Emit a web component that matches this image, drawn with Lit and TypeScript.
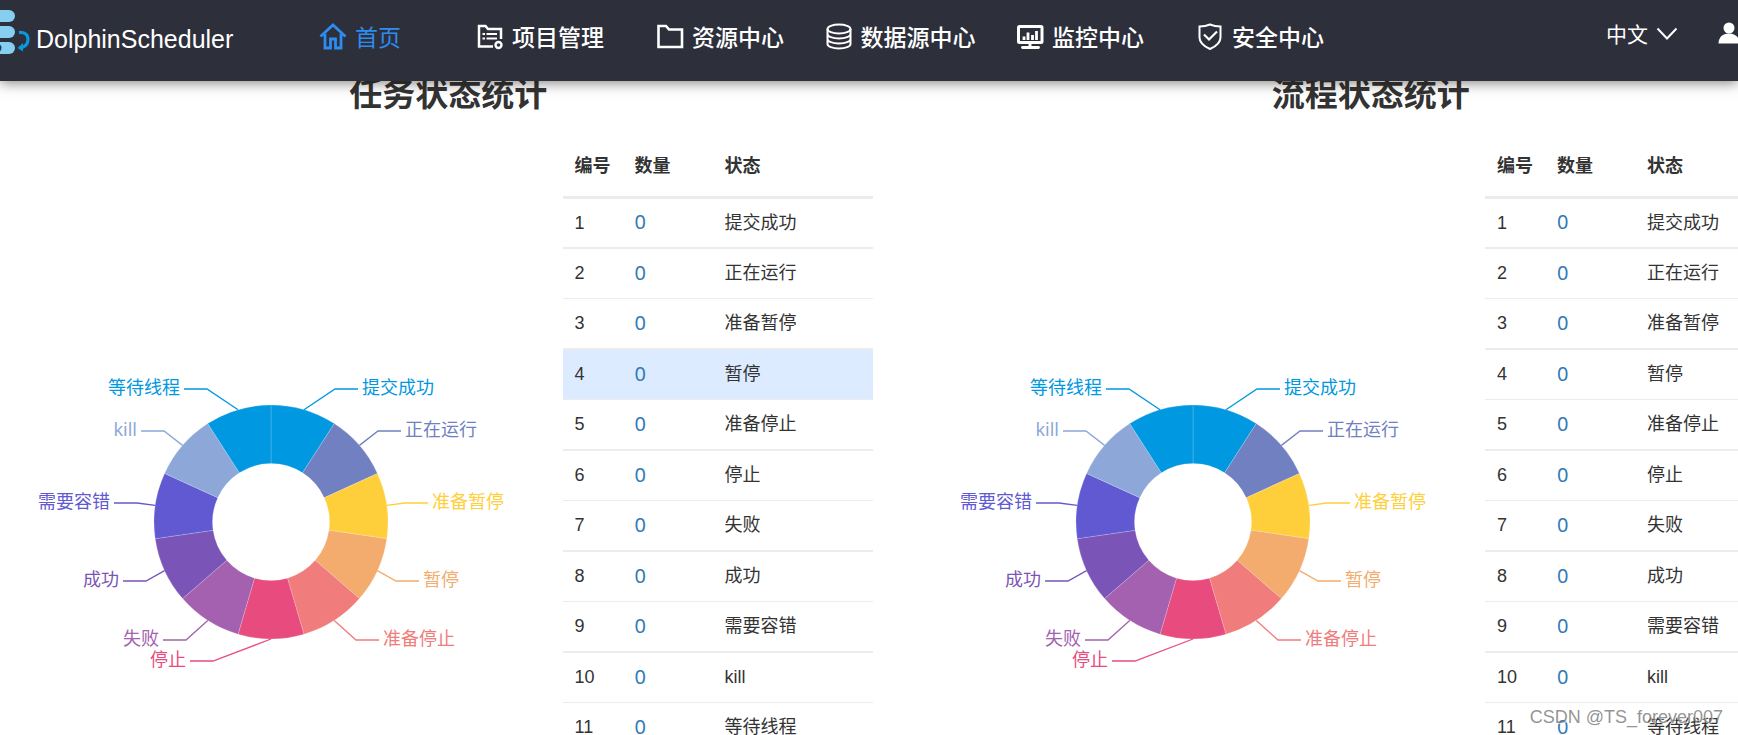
import { LitElement, html, svg, css } from "lit";
import { customElement, property } from "lit/decorators.js";
import { classMap } from "lit/directives/class-map.js";

type Slice = { name: string; color: string; knee: [number, number] };

// knee: where the leader line turns horizontal, measured from the ring's centre.
const STATES: Slice[] = [
  { name: "提交成功", color: "#0098e1", knee: [64, -133] },
  { name: "正在运行", color: "#7180c0", knee: [107, -91] },
  { name: "准备暂停", color: "#ffcf3b", knee: [134, -19] },
  { name: "暂停", color: "#f3ab6e", knee: [125, 59] },
  { name: "准备停止", color: "#f07c7b", knee: [85, 118] },
  { name: "停止", color: "#e84c7f", knee: [-58, 139] },
  { name: "失败", color: "#a361b0", knee: [-85, 118] },
  { name: "成功", color: "#7b54b8", knee: [-125, 59] },
  { name: "需要容错", color: "#6159d1", knee: [-134, -19] },
  { name: "kill", color: "#8ca7d8", knee: [-107, -91] },
  { name: "等待线程", color: "#0098e1", knee: [-64, -133] },
];

const OUTER = 117;
const INNER = 58.5;
const STEP = (Math.PI * 2) / STATES.length;

const FONT = css`"Liberation Sans", "Noto Sans CJK SC", sans-serif`;

@customElement("state-pie")
export class StatePie extends LitElement {
  static styles = css`
    :host { display: block; }
    .pie { display: block; margin: 0 auto; overflow: visible; }
    .label { font: 18px "Noto Sans", "Noto Sans CJK SC", sans-serif; }
  `;

  private point(angle: number, r: number): [number, number] {
    return [r * Math.sin(angle), -r * Math.cos(angle)];
  }

  private slice(s: Slice, i: number) {
    const [x0, y0] = this.point(i * STEP, OUTER);
    const [x1, y1] = this.point((i + 1) * STEP, OUTER);
    const [x2, y2] = this.point((i + 1) * STEP, INNER);
    const [x3, y3] = this.point(i * STEP, INNER);
    return svg`<path fill=${s.color} stroke="#fff" stroke-opacity="0.3" stroke-width="0.6"
      d="M${x0} ${y0}A${OUTER} ${OUTER} 0 0 1 ${x1} ${y1}L${x2} ${y2}A${INNER} ${INNER} 0 0 0 ${x3} ${y3}Z"/>`;
  }

  private label(s: Slice, i: number) {
    const [sx, sy] = this.point((i + 0.5) * STEP, OUTER);
    const [kx, ky] = s.knee;
    const side = kx > 0 ? 1 : -1;
    const end = kx + side * 23;
    return svg`
      <polyline fill="none" stroke=${s.color} stroke-width="1.3"
        points="${sx},${sy} ${kx},${ky} ${end},${ky}"/>
      <text class="label" fill=${s.color} x=${end + side * 4} y=${ky + 5}
        text-anchor=${side > 0 ? "start" : "end"}>${s.name}</text>`;
  }

  render() {
    return html`<svg class="pie" width="480" height="300" viewBox="-240 -150 480 300" role="img" aria-label="状态统计图">
      ${STATES.map((s, i) => this.slice(s, i))}
      ${STATES.map((s, i) => this.label(s, i))}
    </svg>`;
  }
}

@customElement("state-panel")
export class StatePanel extends LitElement {
  @property() heading = "";
  @property({ type: Number }) active = 0;

  static styles = css`
    :host { display: block; }
    .title {
      margin: 0; height: 51px; line-height: 34px; text-align: center;
      font-size: 33px; font-weight: 700; color: #333;
    }
    .body { display: flex; }
    .chart { flex: 1; padding: 243px 8px 0 0; }
    .data { flex: none; width: 310px; margin-right: 37px; border-collapse: collapse; table-layout: fixed; }
    .num { width: 60px; }
    .count { width: 90px; }
    th, td { box-sizing: border-box; padding: 0 0 0 12px; text-align: left; font-size: 18px; line-height: 24px; color: #333; }
    thead tr { height: 68px; }
    th { padding-top: 8px; font-weight: 700; border-bottom: 3px solid #ececec; }
    tbody tr { height: 50px; }
    td { border-bottom: 1px solid #ececec; }
    tbody tr:nth-child(odd) { height: 51px; }
    tbody tr:nth-child(odd) td { border-bottom-width: 2px; }
    .active { background: #dcebff; }
    a { font: 20px/24px "Noto Sans", sans-serif; color: #337ab7; text-decoration: none; }
  `;

  render() {
    return html`
      <h2 class="title">${this.heading}</h2>
      <div class="body">
        <state-pie class="chart"></state-pie>
        <table class="data">
          <thead><tr><th class="num">编号</th><th class="count">数量</th><th>状态</th></tr></thead>
          <tbody>
            ${STATES.map((s, i) => html`<tr class=${classMap({ active: this.active === i + 1 })}>
              <td>${i + 1}</td><td><a href="#">0</a></td><td>${s.name}</td>
            </tr>`)}
          </tbody>
        </table>
      </div>`;
  }
}

const ICONS = {
  home: svg`<path d="M1.5 14.5 14 3l12.500 11.500M6 12v14h5.500v-9h5v9H22V12" stroke-width="2.800"/>`,
  project: svg`<path d="M17 24.500H3V4h6.500l2.500 3H25v10" stroke-width="2.500"/><path d="M6.500 12h2.500M10.500 12h10.500M6.500 16.500h2.500M10.500 16.500h10.500" stroke-width="2.200"/><circle cx="22.500" cy="23" r="3" stroke-width="2.400"/>`,
  folder: svg`<path d="M2.500 4h7.500l3 3.500h13V25H2.500z" stroke-width="2.600"/>`,
  database: svg`<ellipse cx="14" cy="7" rx="11.500" ry="4.500"/><path d="M2.500 7v15c0 2.500 5 4.500 11.500 4.500S25.500 24.500 25.500 22V7M2.500 12c0 2.500 5 4.500 11.500 4.500s11.500-2 11.500-4.500M2.500 17c0 2.500 5 4.500 11.500 4.500s11.500-2 11.500-4.500"/>`,
  monitor: svg`<rect x="2.500" y="4.500" width="23.500" height="16" rx="1" stroke-width="3"/><path d="M8 18v-3.500M12 18v-7.500M16.500 18v-5M20.500 18V9" stroke-width="2.800"/><path d="M14 21v4" stroke-width="3"/><path d="M6.500 25.500h16" stroke-width="2.800" stroke-linecap="round"/>`,
  shield: svg`<path d="M14 2.500c3 1.300 7 2 10.500 2v11c0 6-6 9.500-10.500 11.500C9.500 25 3.500 21.500 3.500 15.500v-11c3.500 0 7.500-.7 10.500-2z"/><path d="m8 12.500 5 5 8-8" stroke-width="2.200"/>`,
};

const NAV: { label: string; icon: keyof typeof ICONS }[] = [
  { label: "首页", icon: "home" },
  { label: "项目管理", icon: "project" },
  { label: "资源中心", icon: "folder" },
  { label: "数据源中心", icon: "database" },
  { label: "监控中心", icon: "monitor" },
  { label: "安全中心", icon: "shield" },
];

@customElement("app-root")
export class AppRoot extends LitElement {
  static styles = css`
    :host {
      display: block; position: relative; height: 100vh; overflow: hidden;
      background: #fff; font-family: ${FONT};
    }
    .bar {
      position: relative; z-index: 2; display: flex; height: 81px;
      background: #2d2f3b; color: #fff; box-shadow: 0 2px 12px rgba(20, 12, 8, 0.5);
    }
    .brand {
      display: flex; flex: none; width: 270px; height: 78px; align-items: center; gap: 5px;
      font-size: 25px; color: #fff; text-decoration: none;
    }
    .logo { flex: none; width: 31px; height: 60px; }
    .nav { display: flex; flex: none; height: 71px; }
    .item {
      display: flex; width: 180px; align-items: center; justify-content: center; gap: 8px;
      font-size: 23px; font-weight: 500; white-space: nowrap; color: #fff; text-decoration: none;
    }
    .item.on { color: #2d8cf0; font-weight: 400; }
    .icon { width: 28px; height: 28px; fill: none; stroke: currentColor; stroke-width: 2; }
    .tools { display: flex; height: 66px; margin: 0 -2px 0 auto; align-items: center; gap: 40px; }
    .tool {
      display: flex; align-items: center; gap: 8px; padding: 0; border: 0; background: none;
      color: #fff; font: 21px ${FONT};
    }
    .chevron { width: 22px; height: 22px; fill: none; stroke: currentColor; stroke-width: 2; }
    .user { width: 22px; height: 22px; fill: currentColor; }
    .main { display: grid; grid-template-columns: 1fr 1fr; margin: -3px -94px 0 -13px; }
    .mark {
      position: absolute; right: 15px; bottom: 6px; z-index: 3; font-size: 18px; line-height: 24px;
      color: rgba(120, 120, 120, 0.8); text-shadow: 1px 1px 0 rgba(255, 255, 255, 0.6);
    }
  `;

  render() {
    return html`
      <header class="bar">
        <a class="brand" href="#">
          <svg class="logo" viewBox="0 0 31 60" aria-hidden="true">
            <g fill="#86cef0">
              <rect x="-20" y="1" width="35" height="12" rx="6"/>
              <rect x="-20" y="17" width="35" height="12" rx="6"/>
              <rect x="-20" y="33" width="35" height="12" rx="6"/>
            </g>
            <path d="M0 35.500q3 2.500 0 7z" fill="#173b5c"/>
            <path d="M19 23.500q9-.5 9 7 0 6-7 8.500" fill="none" stroke="#0b96dd" stroke-width="3.200"/>
            <path d="m17.500 39 5.500-5v8.500z" fill="#0b96dd"/>
          </svg>
          <span>DolphinScheduler</span>
        </a>
        <nav class="nav">
          ${NAV.map((n, i) => html`<a href="#" class=${classMap({ item: true, on: i === 0 })}>
            <svg class="icon" viewBox="0 0 28 28" aria-hidden="true">${ICONS[n.icon]}</svg><span>${n.label}</span>
          </a>`)}
        </nav>
        <div class="tools">
          <button class="tool">中文
            <svg class="chevron" viewBox="0 0 22 22" aria-hidden="true"><path d="m1.500 6.500 9.500 10 9.500-10"/></svg>
          </button>
          <button class="tool" aria-label="用户">
            <svg class="user" viewBox="0 0 22 22"><circle cx="11" cy="6" r="5.500"/><path d="M.5 21.500c0-6 4-10 10.500-10s10.500 4 10.500 10z"/></svg>
          </button>
        </div>
      </header>
      <main class="main">
        <state-panel heading="任务状态统计" .active=${4}></state-panel>
        <state-panel heading="流程状态统计"></state-panel>
      </main>
      <div class="mark">CSDN @TS_forever007</div>`;
  }
}
